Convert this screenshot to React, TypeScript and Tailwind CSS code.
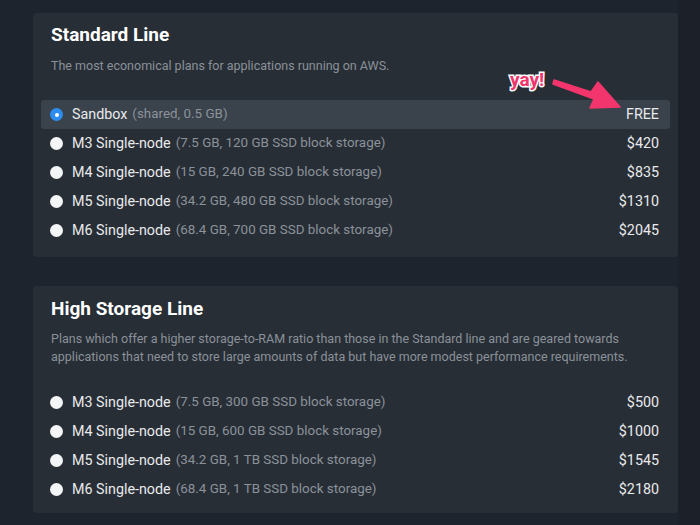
const standard = [
  { name: "M3 Single-node", spec: "(7.5 GB, 120 GB SSD block storage)", price: "$420" },
  { name: "M4 Single-node", spec: "(15 GB, 240 GB SSD block storage)", price: "$835" },
  { name: "M5 Single-node", spec: "(34.2 GB, 480 GB SSD block storage)", price: "$1310" },
  { name: "M6 Single-node", spec: "(68.4 GB, 700 GB SSD block storage)", price: "$2045" },
];

const highStorage = [
  { name: "M3 Single-node", spec: "(7.5 GB, 300 GB SSD block storage)", price: "$500" },
  { name: "M4 Single-node", spec: "(15 GB, 600 GB SSD block storage)", price: "$1000" },
  { name: "M5 Single-node", spec: "(34.2 GB, 1 TB SSD block storage)", price: "$1545" },
  { name: "M6 Single-node", spec: "(68.4 GB, 1 TB SSD block storage)", price: "$2180" },
];

function Radio({ checked }: { checked?: boolean }) {
  if (checked) {
    return (
      <span className="w-[13px] h-[13px] rounded-full bg-[#2d8cf0] flex items-center justify-center shrink-0">
        <span className="w-[4px] h-[4px] rounded-full bg-white" />
      </span>
    );
  }
  return <span className="w-[13px] h-[13px] rounded-full bg-[#f4f5f6] shrink-0" />;
}

function PlanRow({
  name,
  spec,
  price,
  checked,
}: {
  name: string;
  spec: string;
  price: string;
  checked?: boolean;
}) {
  return (
    <div
      className={`mx-2 h-[29px] pl-[9px] pr-[11px] flex items-center rounded-[3px] ${
        checked ? "bg-[#3a424b]" : ""
      }`}
    >
      <Radio checked={checked} />
      <span className="ml-[9px] text-[14.3px] text-[#e8eaec]">{name}</span>
      <span className="ml-[5px] text-[13.4px] text-[#8b929a]">{spec}</span>
      <span className="ml-auto text-[14.3px] text-[#e8eaec]">{price}</span>
    </div>
  );
}

export default function App() {
  return (
    <div
      className="w-[700px] h-[525px] flex bg-[#1e242d] overflow-hidden"
      style={{ fontFamily: "Roboto, 'Liberation Sans', sans-serif" }}
    >
      <div className="w-[678px] pl-[33px] pt-[13px] flex flex-col">
        {/* Standard line */}
        <section className="relative bg-[#282e36] rounded-[4px] pt-[11px] pb-[12px]">
          <h2 className="px-[18px] text-[19px] leading-[22px] font-bold text-white">Standard Line</h2>
          <p className="px-[18px] mt-[11px] text-[12.5px] leading-[18px] text-[#8a9199]">
            The most economical plans for applications running on AWS.
          </p>
          <div className="mt-[25px]">
            <PlanRow name="Sandbox" spec="(shared, 0.5 GB)" price="FREE" checked />
            {standard.map((p) => (
              <PlanRow key={p.name} {...p} />
            ))}
          </div>

          {/* yay! annotation */}
          <span
            className="absolute left-[477px] top-[56px] text-[19px] leading-[22px] font-bold text-[#f0336b]"
            style={{ WebkitTextStroke: "3px white", paintOrder: "stroke fill" }}
          >
            yay!
          </span>
          <svg className="absolute left-[518px] top-[62px]" width="72" height="40" viewBox="0 0 72 40">
            <path
              d="M3 5 L40 17 L47 7 L69 32 L39 33 L43 24 L2 9 Z"
              fill="#f2356c"
              stroke="#f2356c"
              strokeWidth="1.5"
              strokeLinejoin="round"
            />
          </svg>
        </section>

        {/* High storage line */}
        <section className="mt-[29px] bg-[#282e36] rounded-[4px] pt-[12px] pb-[9px]">
          <h2 className="px-[18px] text-[19px] leading-[22px] font-bold text-white">High Storage Line</h2>
          <p className="px-[18px] mt-[10px] text-[12.5px] leading-[18px] text-[#8a9199]">
            Plans which offer a higher storage-to-RAM ratio than those in the Standard line and are geared towards
            applications that need to store large amounts of data but have more modest performance requirements.
          </p>
          <div className="mt-[22px]">
            {highStorage.map((p) => (
              <PlanRow key={p.name} {...p} />
            ))}
          </div>
        </section>
      </div>
      <div className="flex-1 bg-[#1b2029]" />
    </div>
  );
}
